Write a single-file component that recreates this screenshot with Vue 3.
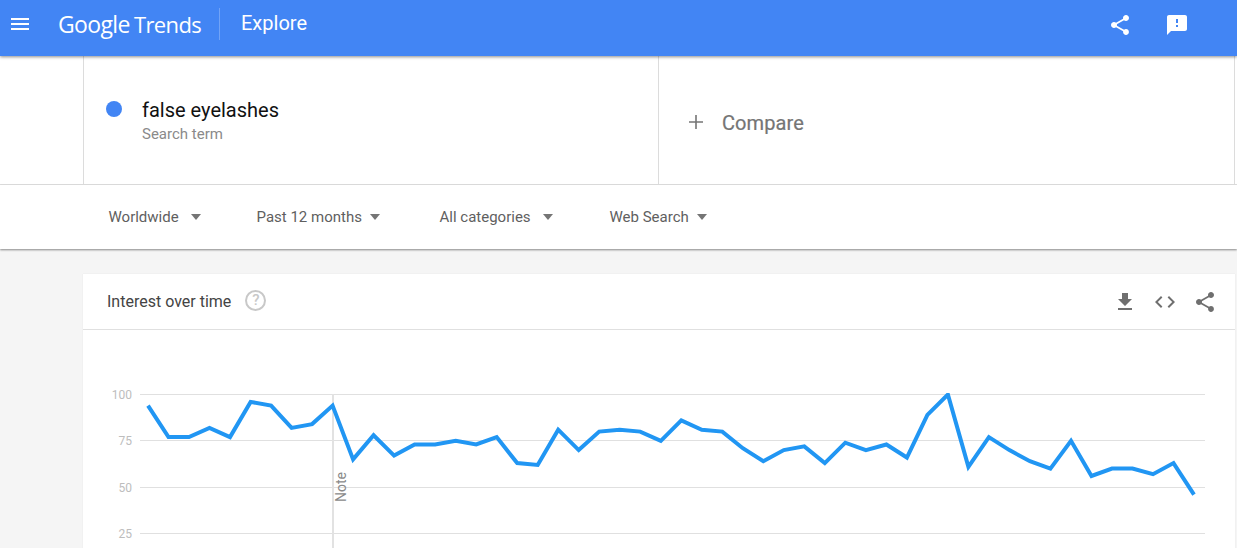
<template>
  <div class="page">
    <header class="topbar">
      <svg class="menu-icon" width="24" height="24" viewBox="0 0 24 24">
        <path fill="#fff" d="M3 18h18v-2H3v2zm0-5h18v-2H3v2zm0-7v2h18V6H3z"/>
      </svg>
      <div class="logo"><span class="logo-google">Google</span> <span class="logo-trends">Trends</span></div>
      <div class="bar-title">Explore</div>
      <div class="bar-actions">
        <svg width="24" height="24" viewBox="0 0 24 24">
          <path fill="#fff" :d="sharePath"/>
        </svg>
        <svg width="24" height="24" viewBox="0 0 24 24">
          <path fill="#fff" d="M20 2H4c-1.1 0-2 .9-2 2v18l4-4h14c1.1 0 2-.9 2-2V4c0-1.100-.9-2-2-2zm-7 12h-2v-2h2v2zm0-4h-2V6h2v4z"/>
        </svg>
      </div>
    </header>

    <section class="search-row">
      <div class="term">
        <span class="term-dot"></span>
        <div>
          <div class="term-name">false eyelashes</div>
          <div class="term-type">Search term</div>
        </div>
      </div>
      <div class="compare">
        <svg width="24" height="24" viewBox="0 0 24 24">
          <path fill="#757575" d="M19 12.800h-6.200V19h-1.600v-6.200H5v-1.600h6.200V5h1.600v6.200H19z"/>
        </svg>
        <span>Compare</span>
      </div>
    </section>

    <nav class="filters">
      <div v-for="f in filters" :key="f.label" class="filter" :style="{ width: f.width + 'px' }">
        <span>{{ f.label }}</span>
        <i class="caret" :style="{ marginLeft: f.gap + 'px' }"></i>
      </div>
    </nav>

    <main class="content">
      <section class="card">
        <div class="card-head">
          <span class="card-title">Interest over time</span>
          <span class="help">?</span>
          <div class="card-actions">
            <svg width="24" height="24" viewBox="0 0 24 24">
              <path fill="#6f6f6f" d="M19 9h-4V3H9v6H5l7 7 7-7zM5 18v2h14v-2H5z"/>
            </svg>
            <svg width="24" height="24" viewBox="0 0 24 24">
              <path fill="#6f6f6f" d="M9.400 16.600 4.800 12l4.600-4.600L8 6l-6 6 6 6 1.400-1.400zm5.200 0 4.600-4.600-4.600-4.600L16 6l6 6-6 6-1.400-1.400z"/>
            </svg>
            <svg width="24" height="24" viewBox="0 0 24 24">
              <path fill="#6f6f6f" :d="sharePath"/>
            </svg>
          </div>
        </div>
        <svg class="chart" width="1152" height="219" viewBox="83 330 1152 219">
          <defs>
            <clipPath id="plot-area">
              <rect x="140" y="393" width="1065" height="156"/>
            </clipPath>
          </defs>
          <g v-for="t in ticks" :key="t.label">
            <line x1="140" x2="1205" :y1="t.y" :y2="t.y" class="grid"/>
            <text x="132" :y="t.y + 4" text-anchor="end" class="tick">{{ t.label }}</text>
          </g>
          <line x1="333" x2="333" y1="394" y2="548" class="note-line"/>
          <text class="note" transform="translate(346 502) rotate(-90)">Note</text>
          <polyline :points="points" class="trend" clip-path="url(#plot-area)"/>
        </svg>
      </section>
    </main>
  </div>
</template>

<script setup>
const sharePath = 'M18 16.080c-.76 0-1.440.3-1.960.77L8.910 12.700c.05-.23.09-.46.09-.7s-.04-.47-.09-.7l7.050-4.110c.54.5 1.250.81 2.040.81 1.660 0 3-1.340 3-3s-1.340-3-3-3-3 1.340-3 3c0 .24.04.47.09.7L8.040 9.810C7.500 9.310 6.790 9 6 9c-1.660 0-3 1.340-3 3s1.340 3 3 3c.79 0 1.500-.31 2.040-.81l7.120 4.160c-.05.21-.08.43-.08.65 0 1.610 1.310 2.920 2.920 2.920s2.920-1.310 2.920-2.920-1.310-2.920-2.920-2.920z'

const filters = [
  { label: 'Worldwide', width: 148, gap: 12 },
  { label: 'Past 12 months', width: 183, gap: 8 },
  { label: 'All categories', width: 170, gap: 12 },
  { label: 'Web Search', width: 110, gap: 8 }
]

const ticks = [
  { label: '100', y: 394.5 },
  { label: '75', y: 440.5 },
  { label: '50', y: 487.5 },
  { label: '25', y: 533.5 }
]

const values = [94, 77, 77, 82, 77, 96, 94, 82, 84, 94, 65, 78, 67, 73, 73, 75, 73, 77, 63, 62, 81, 70, 80, 81, 80, 75, 86, 81, 80, 71, 64, 70, 72, 63, 74, 70, 73, 66, 89, 100, 61, 77, 70, 64, 60, 75, 56, 60, 60, 57, 63, 46]

const points = values
  .map((v, i) => `${(148 + i * 20.51).toFixed(1)},${(394.5 + (100 - v) * 1.853).toFixed(1)}`)
  .join(' ')
</script>

<style>
html, body {
  margin: 0;
  overflow: hidden;
  background: #f5f5f5;
}
</style>

<style scoped>
.page {
  height: 548px;
  overflow: hidden;
  font-family: Roboto, "Liberation Sans", sans-serif;
  background: #f5f5f5;
}

.topbar {
  position: relative;
  z-index: 2;
  display: flex;
  align-items: center;
  height: 56px;
  background: #4285f4;
  color: #fff;
  box-shadow: 0 1px 3px rgba(0, 0, 0, 0.45);
}

.menu-icon {
  margin-left: 8px;
  margin-bottom: 9px;
}

.logo {
  width: 161px;
  margin-left: 26px;
  margin-bottom: 8px;
  height: 32px;
  line-height: 32px;
  font-family: "Open Sans", sans-serif;
  font-size: 23px;
  letter-spacing: -0.65px;
  white-space: nowrap;
  border-right: 1px solid rgba(255, 255, 255, 0.25);
}

.logo-trends {
  font-size: 22px;
  margin-left: -1px;
}

.bar-title {
  margin-left: 21px;
  margin-bottom: 10px;
  font-size: 20px;
  font-weight: 400;
}

.bar-actions {
  display: flex;
  gap: 33px;
  margin-left: auto;
  margin-right: 48px;
  margin-bottom: 6px;
}

.search-row {
  display: flex;
  height: 129px;
  padding-left: 83px;
  background: #fff;
  border-bottom: 1px solid #e0e0e0;
  box-sizing: border-box;
}

.term {
  display: flex;
  align-items: center;
  width: 575px;
  padding-left: 22px;
  padding-top: 4px;
  box-sizing: border-box;
  border-left: 1px solid #dcdcdc;
}

.term-dot {
  width: 16px;
  height: 16px;
  margin-right: 20px;
  margin-top: -26px;
  border-radius: 50%;
  background: #4285f4;
}

.term-name {
  font-size: 20px;
  line-height: 24px;
  color: #111;
}

.term-type {
  font-size: 15px;
  line-height: 24px;
  color: #8a8a8a;
}

.compare {
  display: flex;
  align-items: center;
  gap: 14px;
  width: 577px;
  padding-left: 25px;
  padding-top: 4px;
  box-sizing: border-box;
  border-left: 1px solid #dcdcdc;
  border-right: 1px solid #dcdcdc;
  font-size: 20px;
  letter-spacing: 0.1px;
  color: #757575;
}

.compare span {
  margin-top: 2px;
  -webkit-text-stroke: 0.2px #757575;
}

.filters {
  position: relative;
  z-index: 1;
  display: flex;
  align-items: center;
  height: 64px;
  padding-left: 108.500px;
  background: #fff;
  box-shadow: 0 1px 2px rgba(0, 0, 0, 0.45);
  font-size: 15px;
  color: #5f5f5f;
}

.filter {
  display: flex;
  align-items: center;
}

.caret {
  width: 0;
  height: 0;
  border-left: 5.500px solid transparent;
  border-right: 5.500px solid transparent;
  border-top: 6px solid #757575;
}

.content {
  padding: 25px 2px 0 83px;
}

.card {
  background: #fff;
  box-shadow: 0 0 1px rgba(0, 0, 0, 0.1);
}

.card-head {
  display: flex;
  align-items: center;
  height: 55px;
  padding-left: 24px;
  border-bottom: 1px solid #e0e0e0;
}

.card-title {
  font-size: 16px;
  color: #444;
}

.help {
  width: 17px;
  height: 17px;
  margin-left: 14px;
  margin-top: -2px;
  border: 2px solid #c8c8c8;
  border-radius: 50%;
  font-size: 15px;
  font-weight: 500;
  line-height: 17px;
  text-align: center;
  color: #c8c8c8;
}

.card-actions {
  display: flex;
  gap: 16px;
  margin-left: auto;
  margin-right: 18px;
}

.chart {
  display: block;
}

.grid {
  stroke: #e0e0e0;
  stroke-width: 1;
}

.tick {
  font-size: 12px;
  fill: #bdbdbd;
}

.note-line {
  stroke: #e2e2e2;
  stroke-width: 2;
}

.note {
  font-size: 14px;
  fill: #8a8a8a;
}

.trend {
  fill: none;
  stroke: #2196f3;
  stroke-width: 4;
  stroke-linejoin: miter;
}
</style>
